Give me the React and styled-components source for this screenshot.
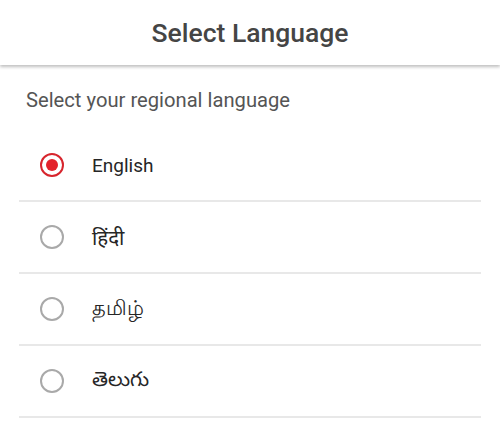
import React, { useState } from "react";
import styled, { createGlobalStyle } from "styled-components";

const GlobalStyle = createGlobalStyle`
  html, body {
    margin: 0;
    padding: 0;
    background: #ffffff;
  }
  body {
    font-family: Roboto, "Noto Sans", Arial, sans-serif;
  }
`;

const languages = [
  { id: "en", label: "English", native: false },
  { id: "hi", label: "हिंदी", native: true },
  { id: "ta", label: "தமிழ்", native: true },
  { id: "te", label: "తెలుగు", native: true },
];

const App = () => {
  const [selected, setSelected] = useState("en");

  return (
    <>
      <GlobalStyle />
      <Page>
        <Header>
          <Title>Select Language</Title>
        </Header>
        <Subtitle>Select your regional language</Subtitle>
        <List>
          {languages.map((lang) => (
            <Row key={lang.id} onClick={() => setSelected(lang.id)}>
              <Radio $checked={selected === lang.id} />
              <Label $native={lang.native}>{lang.label}</Label>
            </Row>
          ))}
        </List>
      </Page>
    </>
  );
};

const Page = styled.div`
  width: 500px;
  min-height: 445px;
  background: #fff;
`;

const Header = styled.header`
  height: 65px;
  display: flex;
  align-items: center;
  justify-content: center;
  box-shadow: 0 2px 3px rgba(0, 0, 0, 0.25);
  position: relative;
  z-index: 1;
`;

const Title = styled.h1`
  margin: 0;
  font-size: 26.5px;
  line-height: 30px;
  font-weight: 500;
  color: #454545;
`;

const Subtitle = styled.p`
  margin: 23px 0 0 26px;
  font-size: 20.2px;
  line-height: 24px;
  color: #555;
`;

const List = styled.ul`
  list-style: none;
  margin: 18px 19px 0;
  padding: 0;
`;

const Row = styled.li`
  height: 70px;
  display: flex;
  align-items: center;
  gap: 28px;
  padding-left: 21px;
  border-bottom: 2px solid #e8e8e8;
  cursor: pointer;
`;

const Radio = styled.span`
  width: 24px;
  height: 24px;
  box-sizing: border-box;
  border-radius: 50%;
  border: 2.5px solid ${(p) => (p.$checked ? "#d7252d" : "#a9a9a9")};
  display: flex;
  align-items: center;
  justify-content: center;
  &::after {
    content: "";
    width: 12px;
    height: 12px;
    border-radius: 50%;
    background: ${(p) => (p.$checked ? "#e3222b" : "transparent")};
  }
`;

const Label = styled.span`
  font-size: ${(p) => (p.$native ? "20.5px" : "19px")};
  color: #262626;
`;

export default App;
